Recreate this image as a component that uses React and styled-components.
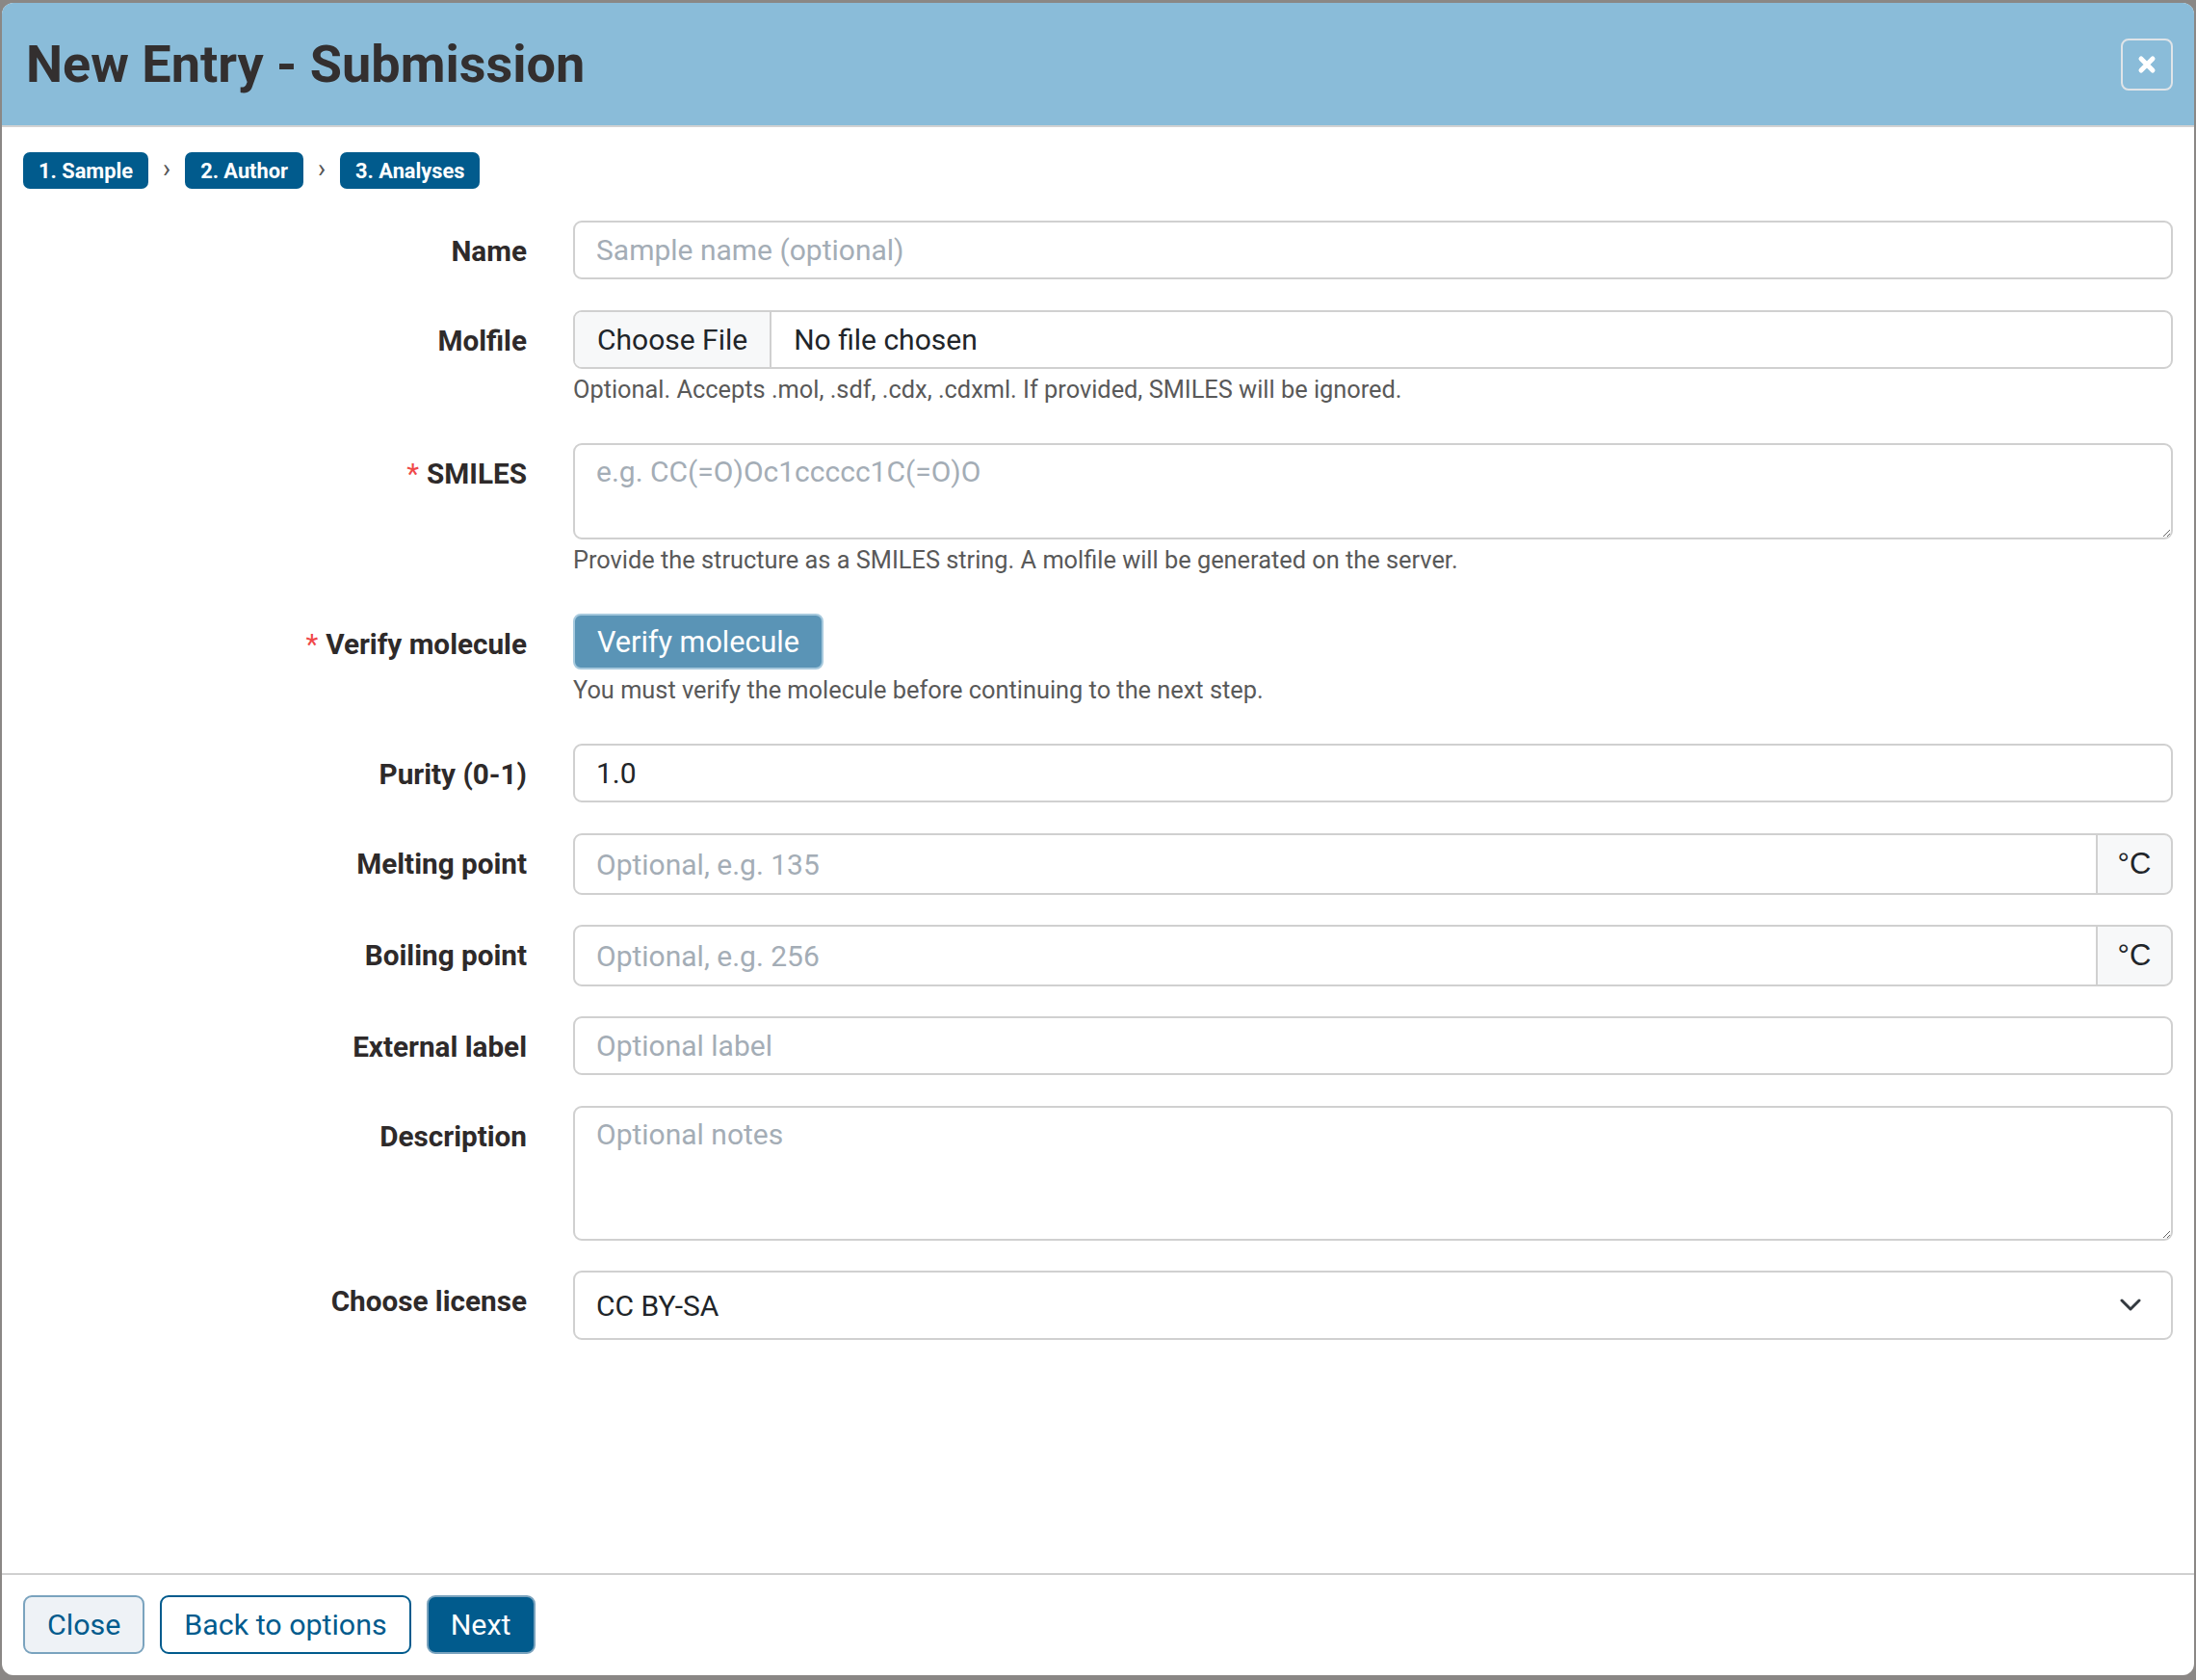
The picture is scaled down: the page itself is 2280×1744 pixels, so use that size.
import React from "react";
import styled, { createGlobalStyle, css } from "styled-components";

const Global = createGlobalStyle`
  html, body { margin: 0; padding: 0; }
  body {
    background: #8a8785;
    font-family: Roboto, "Noto Sans", "Liberation Sans", sans-serif;
  }
  * { box-sizing: border-box; }
`;

const BLUE = "#015b8d";
const BORDER = "#d0d0d0";

const Modal = styled.div`
  margin: 3px 2px 5px;
  height: 1736px;
  background: #fff;
  border-radius: 12px;
  overflow: hidden;
  display: flex;
  flex-direction: column;
`;

const Header = styled.header`
  flex: none;
  height: 129px;
  background: #8abcd9;
  border-bottom: 2px solid #d2d2d2;
  display: flex;
  align-items: center;
  justify-content: space-between;
  padding: 0 22px 0 25px;
`;

const Title = styled.h1`
  margin: 0;
  font-size: 54px;
  font-weight: 700;
  line-height: 1;
  color: #332f2f;
`;

const CloseX = styled.button`
  width: 54px;
  height: 54px;
  border: 2px solid #dfe4e8;
  border-radius: 8px;
  background: transparent;
  display: grid;
  place-items: center;
  padding: 0;
  cursor: pointer;
`;

const Body = styled.main`
  flex: 1;
  padding: 26px 22px 0;
`;

const Steps = styled.nav`
  display: flex;
  align-items: center;
  height: 38px;
  margin-bottom: 33px;
`;

const Step = styled.span`
  height: 38px;
  display: flex;
  align-items: center;
  padding: 0 16px;
  background: ${BLUE};
  color: #fff;
  border-radius: 7px;
  font-size: 21.8px;
  font-weight: 700;
`;

const StepSep = styled.span`
  color: #555;
  font-size: 27px;
  line-height: 1;
  margin: 0 15px;
  padding-bottom: 3px;
`;

const Row = styled.div`
  display: grid;
  grid-template-columns: 523px 1fr;
  column-gap: 48px;
  margin-bottom: 31px;
`;

const Label = styled.label`
  text-align: right;
  font-size: 29.7px;
  font-weight: 700;
  color: #2e2a2a;
  line-height: 60px;
  padding-top: 2px;
  white-space: nowrap;
`;

const Req = styled.span`
  color: #f04848;
  font-weight: 400;
  margin-right: 8px;
`;

const Field = styled.div`
  display: flex;
  flex-direction: column;
  min-width: 0;
`;

const fieldBase = css`
  width: 100%;
  border: 2px solid ${BORDER};
  border-radius: 9px;
  font-family: Roboto, "Noto Sans", sans-serif;
  font-size: 30px;
  color: #212529;
  background: #fff;
  outline: none;
  &::placeholder { color: #a4adb6; }
`;

const TextInput = styled.input`
  ${fieldBase}
  height: 61px;
  padding: 0 22px;
  ${(p) => p.$grouped && css`
    flex: 1;
    height: 100%;
    border-top-right-radius: 0;
    border-bottom-right-radius: 0;
  `}
`;

const TextArea = styled.textarea`
  ${fieldBase}
  display: block;
  height: ${(p) => p.$h}px;
  padding: 7px 22px;
  line-height: 42px;
  resize: vertical;
`;

const FileBox = styled.label`
  display: flex;
  height: 61px;
  border: 2px solid ${BORDER};
  border-radius: 9px;
  overflow: hidden;
  font-size: 30px;
  color: #212529;
  cursor: pointer;
  input { display: none; }
`;

const FileButton = styled.span`
  display: flex;
  align-items: center;
  padding: 0 23px;
  background: #f7f8f9;
  border-right: 2px solid ${BORDER};
`;

const FileName = styled.span`
  display: flex;
  align-items: center;
  padding: 0 23px;
`;

const Help = styled.div`
  margin: 2px 0 6px;
  font-size: 25.35px;
  line-height: 38px;
  color: #595959;
`;

const VerifyButton = styled.button`
  align-self: flex-start;
  height: 58px;
  padding: 0 23px;
  background: #5a94b6;
  border: 2px solid #a6c9dd;
  border-radius: 8px;
  color: #fff;
  font-family: Roboto, sans-serif;
  font-size: 30.6px;
  cursor: pointer;
`;

const Group = styled.div`
  display: flex;
  height: 64px;
`;

const Addon = styled.span`
  width: 80px;
  display: flex;
  align-items: center;
  justify-content: center;
  background: #f7f8f9;
  border: 2px solid ${BORDER};
  margin-left: -2px;
  border-radius: 0 9px 9px 0;
  font-family: "Liberation Sans", Arial, sans-serif;
  font-size: 31px;
  color: #212529;
`;

const SelectWrap = styled.div`
  position: relative;
  height: 72px;
`;

const Select = styled.select`
  ${fieldBase}
  height: 100%;
  appearance: none;
  padding: 0 70px 0 22px;
`;

const Chevron = styled.svg`
  position: absolute;
  right: 33px;
  top: 50%;
  transform: translateY(-50%);
  pointer-events: none;
`;

const Footer = styled.footer`
  flex: none;
  border-top: 2px solid ${BORDER};
  padding: 21px 22px 22px;
  display: flex;
  gap: 16px;
`;

const variants = {
  light: css`
    background: #eef2f6;
    border-color: #7aa3be;
    color: ${BLUE};
  `,
  outline: css`
    background: #fff;
    border-color: ${BLUE};
    color: ${BLUE};
  `,
  primary: css`
    background: ${BLUE};
    border-color: #7aa3be;
    color: #fff;
  `,
};

const FooterButton = styled.button`
  height: 61px;
  padding: 0 23px;
  border: 2px solid;
  border-radius: 9px;
  font-family: Roboto, sans-serif;
  font-size: 30.4px;
  cursor: pointer;
  ${(p) => variants[p.$variant]}
`;

export default function App() {
  return (
    <>
      <Global />
      <Modal>
        <Header>
          <Title>New Entry - Submission</Title>
          <CloseX aria-label="Close">
            <svg width="20" height="20" viewBox="0 0 20 20">
              <path d="M4 4 L16 16 M16 4 L4 16" stroke="#fff" strokeWidth="5" strokeLinecap="round" />
            </svg>
          </CloseX>
        </Header>
        <Body>
          <Steps>
            <Step>1. Sample</Step>
            <StepSep>›</StepSep>
            <Step>2. Author</Step>
            <StepSep>›</StepSep>
            <Step>3. Analyses</Step>
          </Steps>

          <Row>
            <Label>Name</Label>
            <Field>
              <TextInput placeholder="Sample name (optional)" />
            </Field>
          </Row>

          <Row>
            <Label>Molfile</Label>
            <Field>
              <FileBox>
                <input type="file" />
                <FileButton>Choose File</FileButton>
                <FileName>No file chosen</FileName>
              </FileBox>
              <Help>Optional. Accepts .mol, .sdf, .cdx, .cdxml. If provided, SMILES will be ignored.</Help>
            </Field>
          </Row>

          <Row>
            <Label><Req>*</Req>SMILES</Label>
            <Field>
              <TextArea $h={100} placeholder="e.g. CC(=O)Oc1ccccc1C(=O)O" />
              <Help>Provide the structure as a SMILES string. A molfile will be generated on the server.</Help>
            </Field>
          </Row>

          <Row>
            <Label><Req>*</Req>Verify molecule</Label>
            <Field>
              <VerifyButton>Verify molecule</VerifyButton>
              <Help>You must verify the molecule before continuing to the next step.</Help>
            </Field>
          </Row>

          <Row>
            <Label>Purity (0-1)</Label>
            <Field>
              <TextInput defaultValue="1.0" />
            </Field>
          </Row>

          <Row>
            <Label>Melting point</Label>
            <Field>
              <Group>
                <TextInput $grouped placeholder="Optional, e.g. 135" />
                <Addon>°C</Addon>
              </Group>
            </Field>
          </Row>

          <Row>
            <Label>Boiling point</Label>
            <Field>
              <Group>
                <TextInput $grouped placeholder="Optional, e.g. 256" />
                <Addon>°C</Addon>
              </Group>
            </Field>
          </Row>

          <Row>
            <Label>External label</Label>
            <Field>
              <TextInput placeholder="Optional label" />
            </Field>
          </Row>

          <Row>
            <Label>Description</Label>
            <Field>
              <TextArea $h={140} placeholder="Optional notes" />
            </Field>
          </Row>

          <Row>
            <Label>Choose license</Label>
            <Field>
              <SelectWrap>
                <Select defaultValue="CC BY-SA">
                  <option>CC BY-SA</option>
                  <option>CC BY</option>
                  <option>CC0</option>
                </Select>
                <Chevron width="22" height="14" viewBox="0 0 22 14">
                  <path d="M2 2 L11 11 L20 2" fill="none" stroke="#343a40" strokeWidth="3" strokeLinecap="round" strokeLinejoin="round" />
                </Chevron>
              </SelectWrap>
            </Field>
          </Row>
        </Body>
        <Footer>
          <FooterButton $variant="light">Close</FooterButton>
          <FooterButton $variant="outline">Back to options</FooterButton>
          <FooterButton $variant="primary">Next</FooterButton>
        </Footer>
      </Modal>
    </>
  );
}
